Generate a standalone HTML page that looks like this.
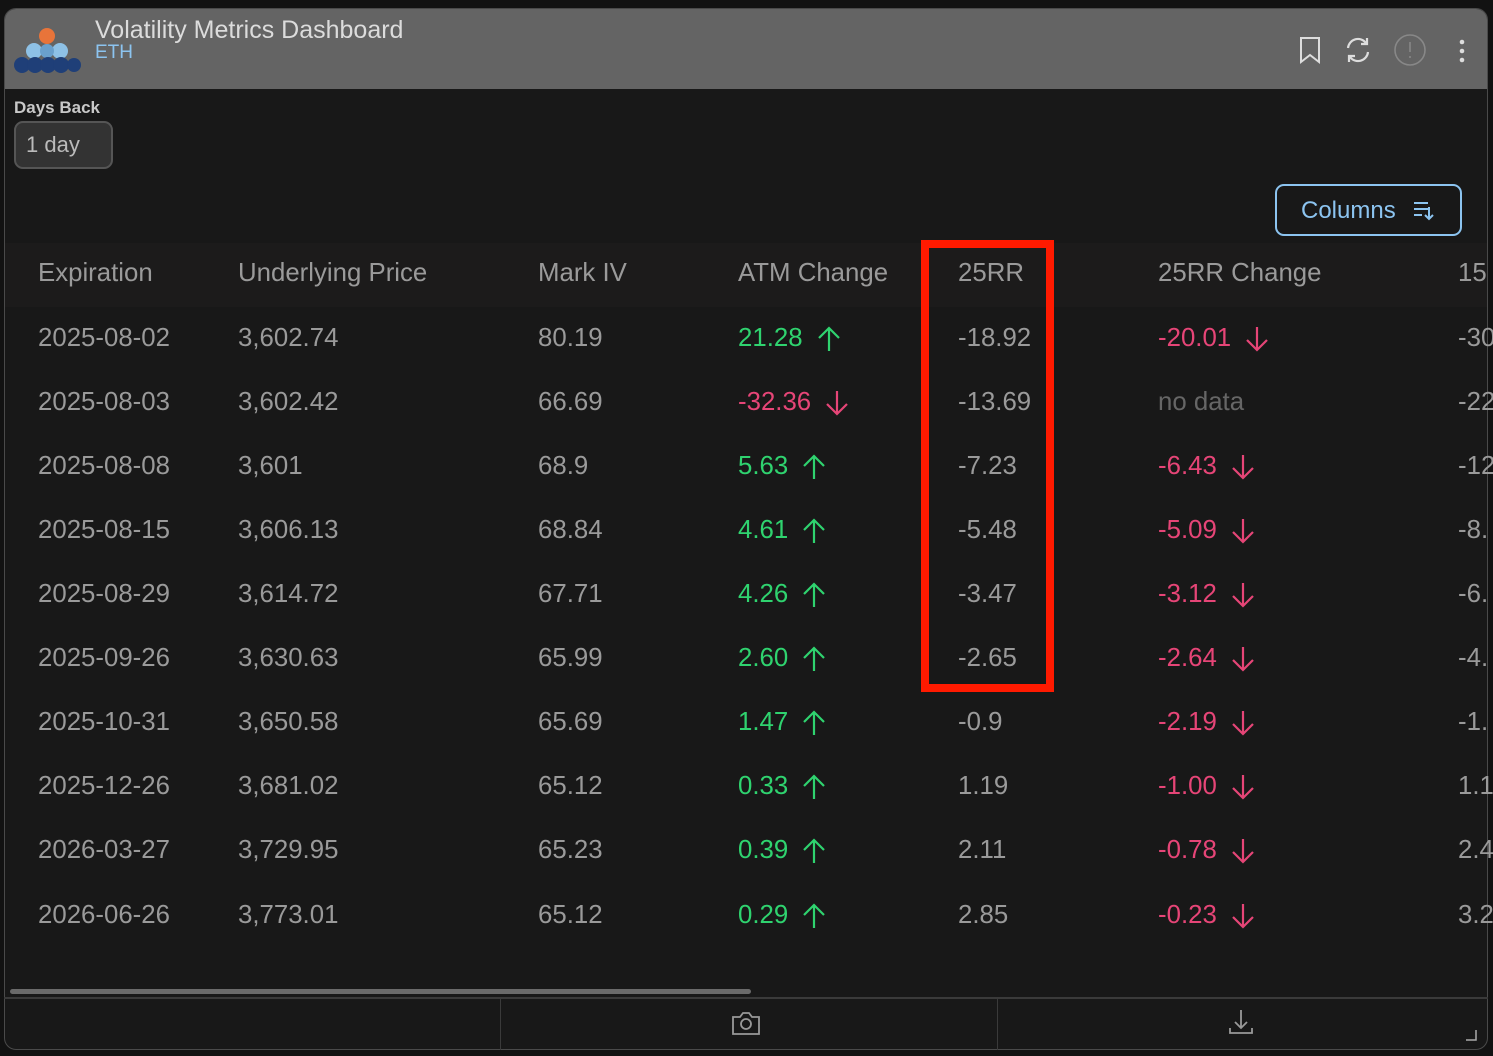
<!DOCTYPE html>
<html><head><meta charset="utf-8"><style>
*{margin:0;padding:0;box-sizing:border-box}
body{width:1493px;height:1056px;background:#121212;font-family:"Liberation Sans",sans-serif;position:relative;overflow:hidden}
.panel{position:absolute;left:4px;top:8px;width:1484px;height:1042px;background:#181818;border:1px solid #4a4a4a;border-radius:12px;overflow:hidden}
.hdr{position:absolute;left:0;top:0;width:100%;height:80px;background:#646464}
.t1{position:absolute;left:90px;top:7px;font-size:25px;color:#dcdcdc}
.t2{position:absolute;left:90px;top:33px;font-size:19px;color:#8cc4f0}
.db{position:absolute;left:9px;top:89px;font-size:17px;font-weight:bold;color:#c8c8c8}
.sel{position:absolute;left:9px;top:112px;width:99px;height:48px;border:2px solid #555;border-radius:9px;background:#333;color:#bbb;font-size:22px;padding:9px 0 0 10px}
.cols{position:absolute;left:1270px;top:175px;width:187px;height:52px;border:2px solid #8cc4f0;border-radius:9px;color:#8cc4f0;font-size:24px;padding:11px 0 0 24px}
.thead{position:absolute;left:0;top:234px;width:100%;height:64px;background:#1c1b1b}
.c{position:absolute;font-size:25.8px;color:#9a9a9a;white-space:nowrap}
.g{color:#2fd36f}.r{color:#e64577}.n{color:#666}
.box{position:absolute;left:921px;top:240px;width:133px;height:452px;border:8px solid #ff1a00}
.sb{position:absolute;left:6px;top:981px;width:741px;height:5px;background:#6a6a6a;border-radius:3px}
.foot{position:absolute;left:0;top:989px;width:100%;height:53px;border-top:2px solid #3a3a3a}
.vl{position:absolute;top:989px;width:1px;height:53px;background:#3a3a3a}
svg.a{position:absolute}
</style></head><body>
<div class="panel">
<div class="hdr">
<svg style="position:absolute;left:8px;top:16px" width="70" height="50" viewBox="0 0 70 50">
<circle cx="34" cy="11" r="8" fill="#e8743a"/>
<circle cx="21" cy="26" r="8" fill="#8ec1e6"/><circle cx="47" cy="26" r="8" fill="#8ec1e6"/><circle cx="34" cy="26" r="7" fill="#6aa0cc"/>
<circle cx="9" cy="40" r="8" fill="#1f3f78"/><circle cx="22" cy="40" r="8" fill="#1f3f78"/><circle cx="35" cy="40" r="8" fill="#1f3f78"/><circle cx="48" cy="40" r="8" fill="#1f3f78"/><circle cx="61" cy="40" r="7" fill="#1f3f78"/>
</svg>
<div class="t1">Volatility Metrics Dashboard</div>
<div class="t2">ETH</div>
<svg style="position:absolute;left:1292px;top:26px" width="26" height="30" viewBox="0 0 26 30" fill="none" stroke="#ddd" stroke-width="2"><path d="M4 3h18v24l-9-7-9 7z"/></svg>
<svg style="position:absolute;left:1338px;top:26px" width="30" height="30" viewBox="0 0 30 30" fill="none" stroke="#ddd" stroke-width="2.2"><path d="M5 13a10 10 0 0 1 18-5M25 17a10 10 0 0 1-18 5"/><path d="M24 3v6h-6M6 27v-6h6"/></svg>
<svg style="position:absolute;left:1388px;top:24px" width="34" height="34" viewBox="0 0 34 34" fill="none" stroke="#888" stroke-width="1.6"><circle cx="17" cy="17" r="15"/><path d="M17 9v10M17 23v2"/></svg>
<svg style="position:absolute;left:1450px;top:28px" width="14" height="30" viewBox="0 0 14 30" fill="#ddd"><circle cx="7" cy="5" r="2.3"/><circle cx="7" cy="14" r="2.3"/><circle cx="7" cy="23" r="2.3"/></svg>
</div>
<div class="db">Days Back</div>
<div class="sel">1 day</div>
<div class="cols">Columns<svg style="position:absolute;left:136px;top:14px" width="24" height="22" viewBox="0 0 24 22" fill="none" stroke="#8cc4f0" stroke-width="2"><path d="M1 3h14M1 9h14M1 15h8M16 7v12M12 15l4 4 4-4"/></svg></div>
<div class="thead"></div>
</div>
<div id="t"></div>
<div class="box"></div>
<div class="panel" style="background:none;border:none"><div class="sb"></div><div class="foot"></div><div class="vl" style="left:496px"></div><div class="vl" style="left:993px"></div>
<svg style="position:absolute;left:727px;top:1002px" width="30" height="26" viewBox="0 0 30 26" fill="none" stroke="#999" stroke-width="1.8"><path d="M2 7h7l3-4h6l3 4h7v17H2z"/><circle cx="15" cy="14" r="5"/></svg>
<svg style="position:absolute;left:1223px;top:1000px" width="28" height="28" viewBox="0 0 28 28" fill="none" stroke="#999" stroke-width="1.8"><path d="M14 2v18M8 14l6 6 6-6M3 20v5h22v-5"/></svg>
<svg style="position:absolute;left:1460px;top:1020px" width="14" height="14" fill="none" stroke="#aaa" stroke-width="1.5"><path d="M12 2v10H2"/></svg>
</div>
<script>
const up='<svg class="a" width="24" height="28" viewBox="0 0 24 28" fill="none" stroke="#2fd36f" stroke-width="2.2"><path d="M12 26V3M2 13L12 3l10 10"/></svg>';
const dn='<svg class="a" width="24" height="28" viewBox="0 0 24 28" fill="none" stroke="#e64577" stroke-width="2.2"><path d="M12 2v23M2 15l10 10 10-10"/></svg>';
const rows=[
["2025-08-02","3,602.74","80.19","21.28","u","-18.92","-20.01","d","-30"],
["2025-08-03","3,602.42","66.69","-32.36","d","-13.69","no data","","-22"],
["2025-08-08","3,601","68.9","5.63","u","-7.23","-6.43","d","-12"],
["2025-08-15","3,606.13","68.84","4.61","u","-5.48","-5.09","d","-8."],
["2025-08-29","3,614.72","67.71","4.26","u","-3.47","-3.12","d","-6."],
["2025-09-26","3,630.63","65.99","2.60","u","-2.65","-2.64","d","-4."],
["2025-10-31","3,650.58","65.69","1.47","u","-0.9","-2.19","d","-1."],
["2025-12-26","3,681.02","65.12","0.33","u","1.19","-1.00","d","1.1"],
["2026-03-27","3,729.95","65.23","0.39","u","2.11","-0.78","d","2.4"],
["2026-06-26","3,773.01","65.12","0.29","u","2.85","-0.23","d","3.2"]];
let h='';
const X=[38,238,538,738,958,1158,1458];
["Expiration","Underlying Price","Mark IV","ATM Change","25RR","25RR Change","15"].forEach((t,i)=>h+=`<div class="c" style="left:${X[i]}px;top:259px">${t}</div>`);
function w(s){let n=0;for(const ch of s)n+=(ch=='-'?8.6:(ch=='.'||ch==','?7.2:14.35));return n}
rows.forEach((r,k)=>{const y=324+k*64+(k>=9?1:0);
h+=`<div class="c" style="left:38px;top:${y}px">${r[0]}</div><div class="c" style="left:238px;top:${y}px">${r[1]}</div><div class="c" style="left:538px;top:${y}px">${r[2]}</div>`;
const ac=r[4]=='u'?'g':'r';h+=`<div class="c ${ac}" style="left:738px;top:${y}px">${r[3]}</div>`;
h+=`<div style="position:absolute;left:${738+w(r[3])+14}px;top:${y+1}px">${r[4]=='u'?up:dn}</div>`;
h+=`<div class="c" style="left:958px;top:${y}px">${r[5]}</div>`;
h+=`<div class="c ${r[7]?'r':'n'}" style="left:1158px;top:${y}px">${r[6]}</div>`;
if(r[7])h+=`<div style="position:absolute;left:${1158+w(r[6])+14}px;top:${y+1}px">${dn}</div>`;
h+=`<div class="c" style="left:1458px;top:${y}px">${r[8]}</div>`;});
document.getElementById('t').innerHTML=h;
</script>
</body></html>
